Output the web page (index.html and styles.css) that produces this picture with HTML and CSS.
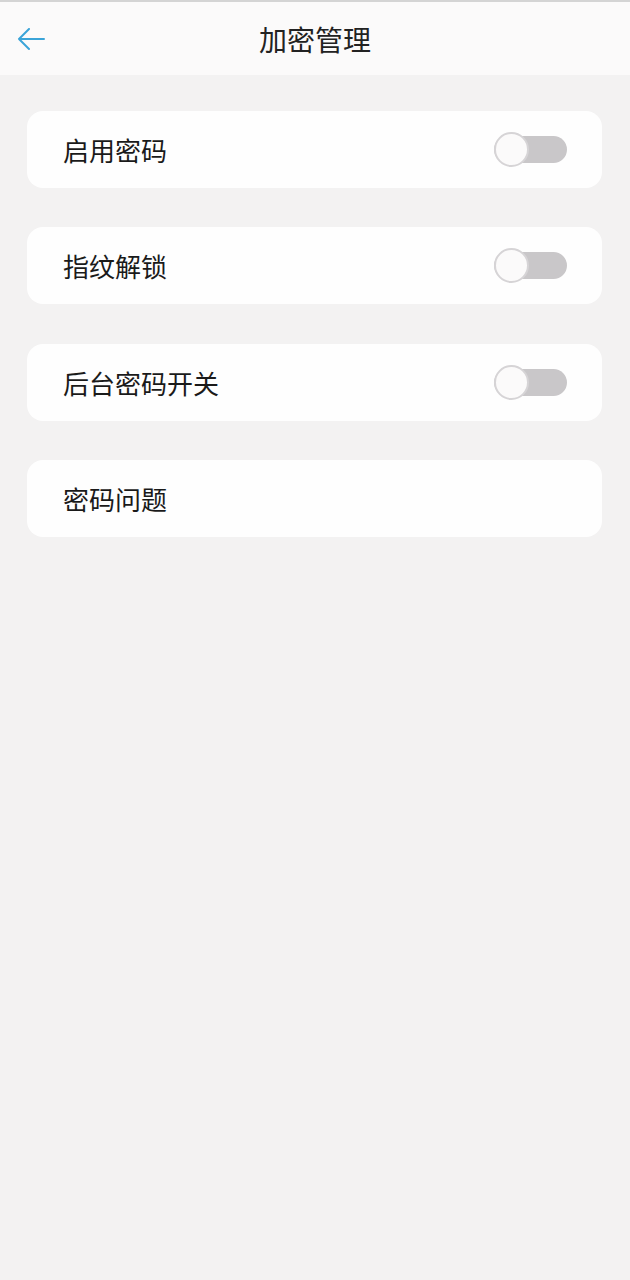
FILE: index.html
```html
<!DOCTYPE html>
<html lang="zh-CN">
<head>
  <meta charset="UTF-8">
  <meta name="viewport" content="width=device-width, initial-scale=1.0">
  <title>加密管理</title>
  <link rel="stylesheet" href="styles.css">
</head>
<body>

  <div class="header">
    <a href="#" class="back">
      <svg width="30" height="24" viewBox="0 0 30 24">
        <path d="M28 11H3M13 1L3 11L13 21" fill="none" stroke="#3ba4d8" stroke-width="2" stroke-linecap="round" stroke-linejoin="round"/>
      </svg>
    </a>
    <h1>加密管理</h1>
  </div>

  <div class="list">
    <div class="item">
      <span>启用密码</span>
      <label class="switch"><input type="checkbox"><span class="knob"></span></label>
    </div>
    <div class="item">
      <span>指纹解锁</span>
      <label class="switch"><input type="checkbox"><span class="knob"></span></label>
    </div>
    <div class="item">
      <span>后台密码开关</span>
      <label class="switch"><input type="checkbox"><span class="knob"></span></label>
    </div>
    <div class="item">
      <span>密码问题</span>
    </div>
  </div>

</body>
</html>
```

FILE: styles.css
```css
body {
  margin: 0;
  font-family: "Noto Sans CJK SC", "Noto Sans", sans-serif;
  background: #f3f2f2;
  color: #1a1a1a;
}

.header {
  position: relative;
  height: 75px;
  background: #fbfafa;
  display: flex;
  align-items: center;
  justify-content: center;
  border-top: 2px solid #d4d4d4;
  box-sizing: border-box;
}

.header h1 {
  margin: 0;
  font-size: 28px;
  font-weight: normal;
  color: #222;
}

.back {
  position: absolute;
  left: 16px;
  top: 26px;
  display: flex;
}

.list {
  display: flex;
  flex-direction: column;
  gap: 39.4px;
  padding: 36px 28px 0 27px;
}

.item {
  height: 77px;
  background: #fefefe;
  border-radius: 16px;
  display: flex;
  align-items: center;
  justify-content: space-between;
  padding: 0 35px 0 36px;
  font-size: 26px;
}

.switch {
  position: relative;
  width: 73px;
  height: 27px;
  border-radius: 14px;
  background: #c9c7c9;
}

.switch input {
  display: none;
}

.knob {
  position: absolute;
  left: 0;
  top: -4px;
  width: 31px;
  height: 31px;
  border-radius: 50%;
  background: #fbfafa;
  border: 2px solid #d6d4d6;
}
```
